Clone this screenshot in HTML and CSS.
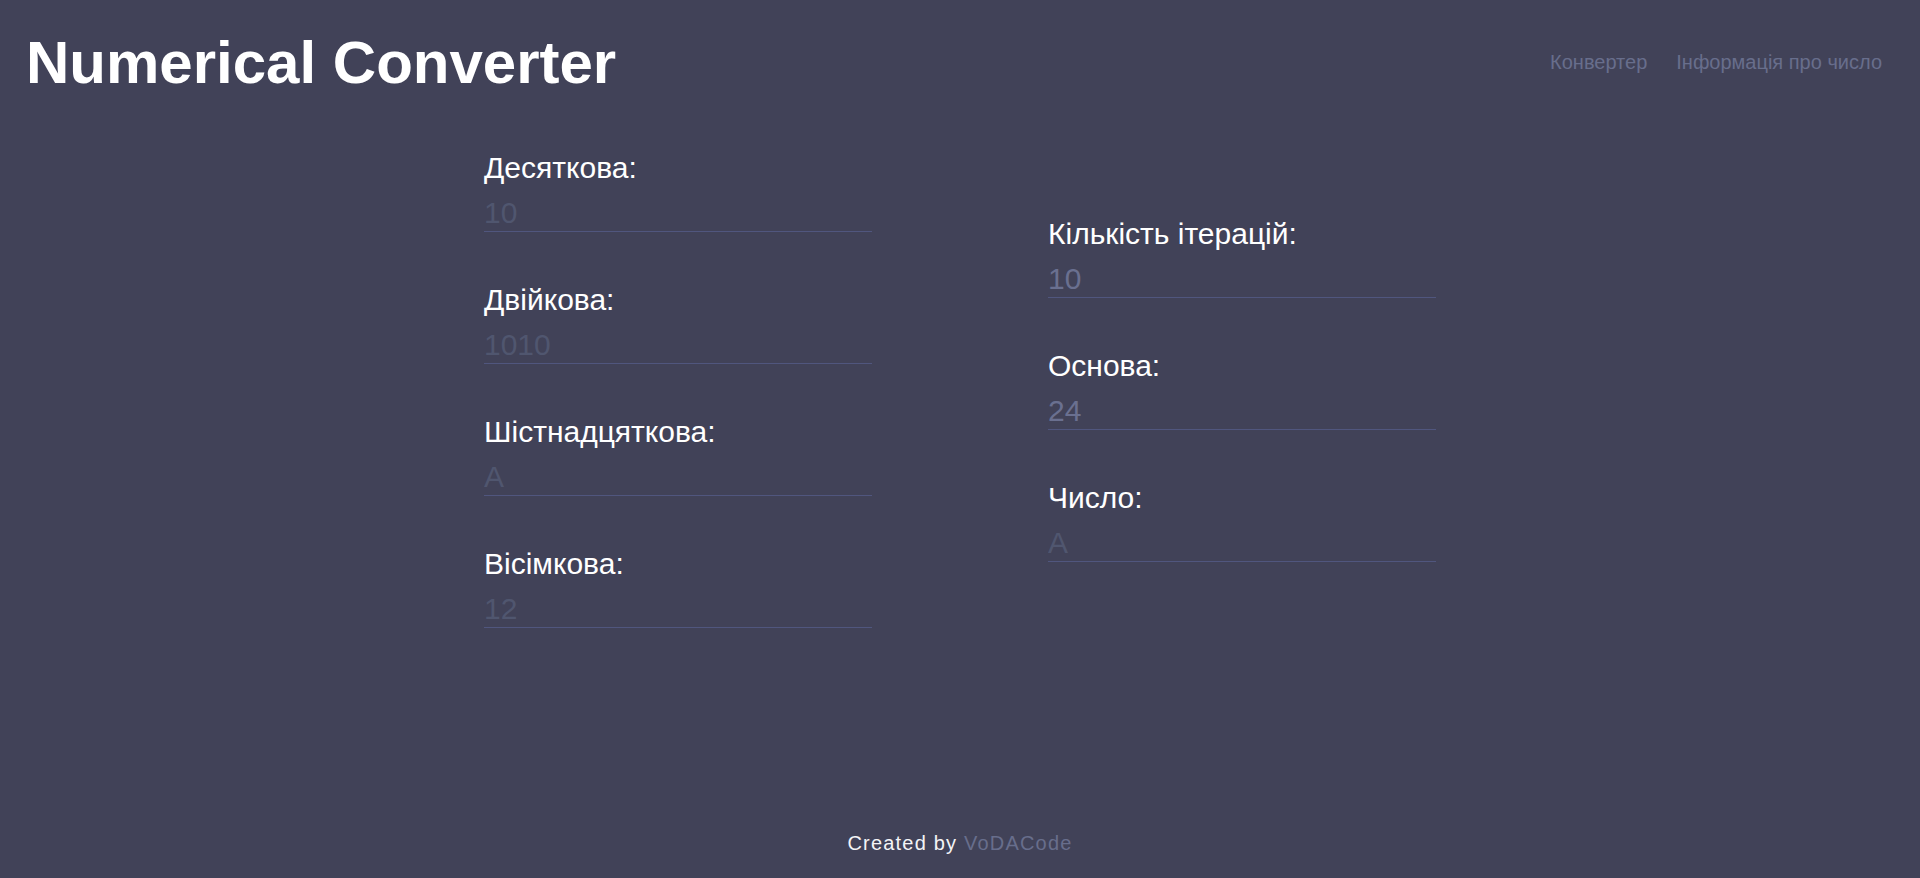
FILE: index.html
```html
<!DOCTYPE html>
<html lang="uk">
<head>
<meta charset="utf-8">
<title>Numerical Converter</title>
<link rel="stylesheet" href="styles.css">
</head>
<body>
<header class="header">
  <h1 class="title">Numerical Converter</h1>
  <nav class="nav">
    <a class="nav-link" href="#">Конвертер</a>
    <a class="nav-link" href="#">Інформація про число</a>
  </nav>
</header>
<main class="main">
  <div class="columns">
    <div class="column">
      <div class="field">
        <label class="label">Десяткова:</label>
        <input class="input" type="text" placeholder="10">
      </div>
      <div class="field">
        <label class="label">Двійкова:</label>
        <input class="input" type="text" placeholder="1010">
      </div>
      <div class="field">
        <label class="label">Шістнадцяткова:</label>
        <input class="input" type="text" placeholder="A">
      </div>
      <div class="field">
        <label class="label">Вісімкова:</label>
        <input class="input" type="text" placeholder="12">
      </div>
    </div>
    <div class="column">
      <div class="field">
        <label class="label">Кількість ітерацій:</label>
        <input class="input" type="text" value="10">
      </div>
      <div class="field">
        <label class="label">Основа:</label>
        <input class="input" type="text" value="24">
      </div>
      <div class="field">
        <label class="label">Число:</label>
        <input class="input" type="text" placeholder="A">
      </div>
    </div>
  </div>
</main>
<footer class="footer">
  <span class="footer-text">Created by <a class="footer-link" href="#">VoDACode</a></span>
</footer>
</body>
</html>
```

FILE: styles.css
```css
html, body {
  margin: 0;
  padding: 0;
}
body {
  background: #414258;
  font-family: "Liberation Sans", Arial, sans-serif;
  color: #ffffff;
  min-height: 100vh;
  display: flex;
  flex-direction: column;
}
.header {
  display: flex;
  align-items: center;
  justify-content: space-between;
  padding: 28px 38px 0 26px;
}
.title {
  margin: 0;
  font-size: 60px;
  font-weight: 700;
  line-height: normal;
  color: #ffffff;
}
.nav {
  display: flex;
  gap: 29px;
}
.nav-link {
  font-size: 20px;
  color: #686e8c;
  text-decoration: none;
}
.main {
  flex: 1;
  padding-top: 54px;
}
.columns {
  display: flex;
  justify-content: center;
  align-items: center;
  gap: 176px;
}
.column {
  display: flex;
  flex-direction: column;
  gap: 51px;
  width: 388px;
}
.field {
  display: flex;
  flex-direction: column;
  gap: 11px;
}
.label {
  font-size: 30px;
  line-height: normal;
  color: #ffffff;
}
.input {
  font-family: "Liberation Sans", Arial, sans-serif;
  font-size: 30px;
  line-height: normal;
  padding: 0 0 1px 0;
  margin: 0;
  border: none;
  border-bottom: 1px solid #50567e;
  background: transparent;
  color: #6a7090;
  outline: none;
  width: 100%;
  height: 36px;
  box-sizing: border-box;
}
.input::placeholder {
  color: #50566f;
  opacity: 1;
}
.footer {
  display: flex;
  justify-content: center;
  padding-bottom: 23px;
}
.footer-text {
  font-size: 20px;
  letter-spacing: 1.2px;
  color: #f4f4f6;
}
.footer-link {
  color: #686e8c;
  text-decoration: none;
}
```
